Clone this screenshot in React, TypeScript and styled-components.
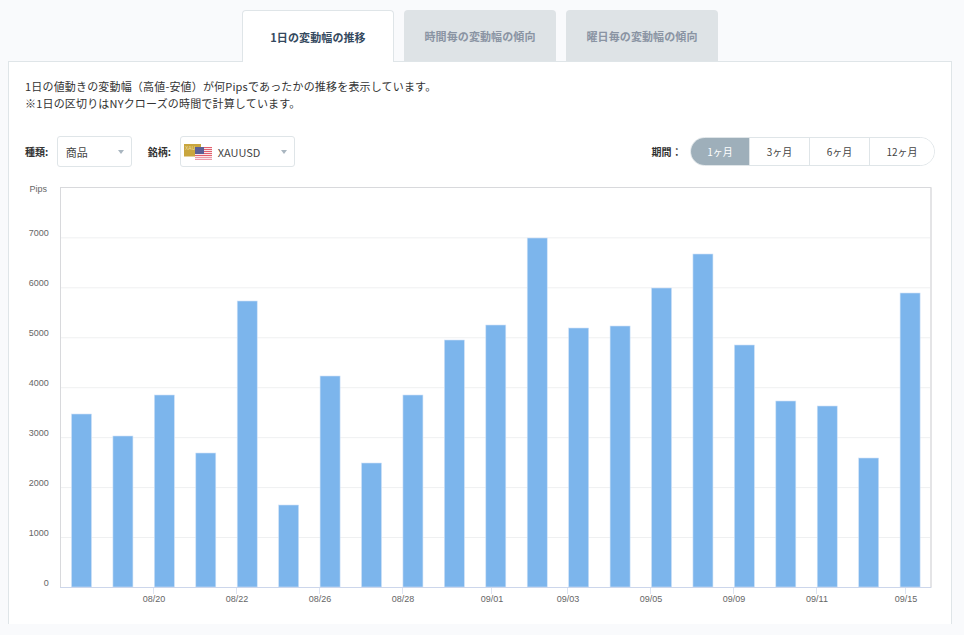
import React from "react";
import styled, { createGlobalStyle } from "styled-components";

const Global = createGlobalStyle`
  html, body { margin: 0; padding: 0; background: #f9fafc; }
  body { font-family: "Noto Sans CJK JP", "Noto Sans", sans-serif; color: #333; overflow: hidden; }
`;
const Page = styled.div`
  width: 964px; height: 635px; padding: 10px 12px 11px 8px; box-sizing: border-box;
  display: flex; flex-direction: column;
`;
const Tabs = styled.div`
  display: flex; justify-content: center; gap: 10px; height: 52px; position: relative; z-index: 1;
`;
const Tab = styled.div<{ $active?: boolean }>`
  width: 152px; box-sizing: border-box; display: flex; align-items: center; justify-content: center;
  font-size: 11px; font-weight: 700; border-radius: 4px 4px 0 0; letter-spacing: 0.01em;
  height: ${p => (p.$active ? "52px" : "51px")};
  background: ${p => (p.$active ? "#fff" : "#dee3e6")};
  color: ${p => (p.$active ? "#34495e" : "#8a94a3")};
  border: ${p => (p.$active ? "1px solid #dfe5e8" : "none")};
  border-bottom: none;
`;
const Panel = styled.div`
  flex: 1; background: #fff; border: 1px solid #dfe5e8; border-bottom: none; margin-top: -1px;
  padding: 16px 16px 0; box-sizing: border-box; display: flex; flex-direction: column;
`;
const Intro = styled.p`
  margin: 0; font-size: 11px; line-height: 17px; color: #333; letter-spacing: 0.016em;
`;
const Controls = styled.div`
  display: flex; align-items: center; margin-top: 24px; height: 31px;
`;
const Label = styled.span`
  font-size: 10px; font-weight: 700; color: #333; margin-right: 8.6px;
`;
const PeriodLabel = styled(Label)`
  margin-right: 8px; letter-spacing: 0.02em;
`;
const Select = styled.div<{ $w: number; $pad: number }>`
  width: ${p => p.$w}px; height: 31px; box-sizing: border-box; background: #fff;
  border: 1px solid #dfe5e8; border-radius: 3px; display: flex; align-items: center;
  padding: 0 7px 0 ${p => p.$pad}px; font-size: 11px; color: #444; margin-right: 16px;
`;
const SelectText = styled.span`
  flex: 1;
`;
const Caret = styled.i`
  width: 0; height: 0; border: 3.5px solid transparent; border-top: 4px solid #a9b6c0; border-bottom: none;
`;
const FlagPair = styled.span`
  position: relative; width: 28px; height: 16px; margin-right: 6px; flex: none;
`;
const Spacer = styled.div`
  flex: 1;
`;
const Periods = styled.div`
  display: flex; height: 29px; width: 245px; box-sizing: border-box; border: 1px solid #dfe5e8;
  border-radius: 15px; overflow: hidden; font-size: 10px;
`;
const Period = styled.div<{ $active?: boolean; $wide?: boolean }>`
  flex: ${p => (p.$wide ? "1" : "0 0 60px")}; display: flex; align-items: center; justify-content: center;
  background: ${p => (p.$active ? "#9eafba" : "#fff")}; color: ${p => (p.$active ? "#fff" : "#444")};
  border-left: ${p => (p.$active ? "none" : "1px solid #dfe5e8")}; box-sizing: border-box;
  ${p => (p.$active ? "flex-basis: 58px;" : "")}
`;
const ChartBox = styled.div`
  margin-top: 10px; margin-left: -16px; width: 942px; height: 445px;
`;

const tops = [414,436,395,453,301,505,376,463,395,340,325,238,328,326,288,254,345,401,406,458,293];
const tickX = [
  { x: 153.5, l: "08/20" }, { x: 236.5, l: "08/22" }, { x: 319.5, l: "08/26" }, { x: 402.5, l: "08/28" },
  { x: 491.5, l: "09/01" }, { x: 567.5, l: "09/03" }, { x: 650.5, l: "09/05" }, { x: 733.5, l: "09/09" },
  { x: 816.5, l: "09/11" }, { x: 905.5, l: "09/15" },
];
const OX = 9, OY = 177;
const yLabels = [0,1000,2000,3000,4000,5000,6000,7000];
const Y = (v: number) => 587.5 - v * 0.04995;
const pitch = 41.43;

function Chart() {
  return (
    <svg width="942" height="445" viewBox={`${OX} ${OY} 942 445`} fontFamily="'Liberation Sans', Arial, sans-serif">
      {yLabels.map(v => <line key={v} x1="61" x2="931" y1={Y(v)} y2={Y(v)} stroke="#eff0f1" strokeWidth="1" />)}
      <rect x="60.5" y="187.5" width="870.5" height="400" fill="none" stroke="#d8d9dc" />
      <line x1="931" x2="931" y1="188" y2="587" stroke="#e4e4e6" strokeWidth="2" />
      {tops.map((t, i) => {
        const x = 71.5 + i * pitch;
        return <rect key={i} x={x} y={t} width="20" height={587 - t} fill="#7cb5ec" stroke="#cfe2f7" strokeWidth="0.6" />;
      })}
      <line x1="60" x2="931" y1="587.5" y2="587.5" stroke="#ccd6eb" />
      {tickX.map(({ x, l }) => (
        <g key={l}>
          <line x1={x} x2={x} y1="588" y2="594" stroke="#dde4f2" />
          <text x={x + 0.5} y="601.5" fontSize="9" textAnchor="middle" fill="#666">{l}</text>
        </g>
      ))}
      {yLabels.map(v => <text key={v} x="48.7" y={Y(v) - 1.8} fontSize="9" textAnchor="end" fill="#666">{v}</text>)}
      <text x="47" y="192" fontSize="9" textAnchor="end" fill="#666">Pips</text>
    </svg>
  );
}

function Flags() {
  return (
    <FlagPair>
      <svg width="28" height="16" viewBox="0 0 28 16" style={{ display: "block" }}>
        <rect x="0" y="0" width="17" height="12.5" fill="#c9a63e" />
        <text x="1" y="6" fontSize="5" fill="#eedfa8" fontFamily="'Liberation Sans', sans-serif">XAU</text>
        {Array.from({ length: 7 }).map((_, i) => (
          <rect key={i} x="11" y={3 + i * 2} width="17" height="1" fill={i > 4 ? "#eb9aa8" : "#e2606f"} />
        ))}
        {Array.from({ length: 6 }).map((_, i) => (
          <rect key={i} x="11" y={4 + i * 2} width="17" height="1" fill="#f8e6e9" />
        ))}
        <rect x="11" y="3" width="9" height="7" fill="#5a5f96" />
      </svg>
    </FlagPair>
  );
}

export default function App() {
  return (
    <Page>
      <Global />
      <Tabs>
        <Tab $active>1日の変動幅の推移</Tab>
        <Tab>時間毎の変動幅の傾向</Tab>
        <Tab>曜日毎の変動幅の傾向</Tab>
      </Tabs>
      <Panel>
        <Intro>
          1日の値動きの変動幅（高値-安値）が何Pipsであったかの推移を表示しています。<br />
          ※1日の区切りはNYクローズの時間で計算しています。
        </Intro>
        <Controls>
          <Label>種類:</Label>
          <Select $w={75} $pad={8}><SelectText>商品</SelectText><Caret /></Select>
          <Label>銘柄:</Label>
          <Select $w={115} $pad={3}><Flags /><SelectText>XAUUSD</SelectText><Caret /></Select>
          <Spacer />
          <PeriodLabel>期間：</PeriodLabel>
          <Periods>
            <Period $active>1ヶ月</Period>
            <Period>3ヶ月</Period>
            <Period>6ヶ月</Period>
            <Period $wide>12ヶ月</Period>
          </Periods>
        </Controls>
        <ChartBox><Chart /></ChartBox>
      </Panel>
    </Page>
  );
}
